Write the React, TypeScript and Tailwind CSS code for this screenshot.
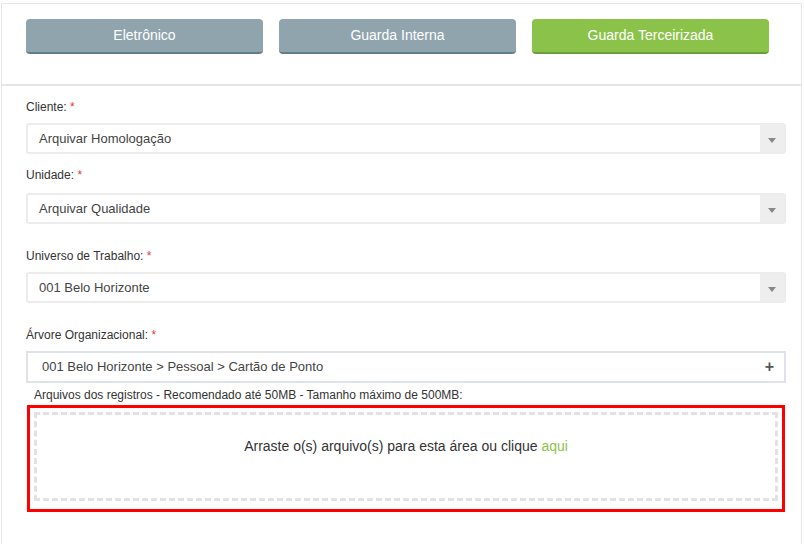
import React from "react";

type SelectProps = {
  label: string;
  value: string;
  className?: string;
  gap?: string;
};

const Label = ({ text, className }: { text: string; className?: string }) => (
  <div className={"h-[16px] text-[12px] leading-[16px] text-[#333] " + (className ?? "")}>
    {text} <span className="text-[#e53935]">*</span>
  </div>
);

const SelectBox = ({ label, value, className, gap }: SelectProps) => (
  <div className={className}>
    <Label text={label} />
    <div className={(gap ?? "mt-[8px]") + " flex h-[31px] rounded-[3px] border-2 border-[#ececec] bg-white"}>
      <div className="flex flex-1 items-center pl-[11px] text-[13px] text-[#444]">{value}</div>
      <div className="flex w-[24px] items-center justify-center bg-[#eeeeee] pt-[3px]">
        <span className="block h-0 w-0 border-x-[4px] border-t-[5px] border-x-transparent border-t-[#888]" />
      </div>
    </div>
  </div>
);

const tabs = [
  { name: "Eletrônico", active: false },
  { name: "Guarda Interna", active: false },
  { name: "Guarda Terceirizada", active: true },
];

export default function App() {
  return (
    <div className="h-[544px] w-[804px] overflow-hidden bg-white pl-[1px] pt-[3px] font-['Liberation_Sans',Arial,sans-serif]">
      <div className="h-[560px] w-[801px] border border-[#e6e6e6]">
        {/* header com os tipos de guarda */}
        <div className="flex gap-[16px] px-[24px] pb-[30px] pt-[15px]">
          {tabs.map((t) => (
            <button
              key={t.name}
              className={
                t.active
                  ? "h-[35px] w-[237px] rounded-[4px] border-b-2 border-[#689f38] bg-[#8bc34a] text-[14px] text-white"
                  : "h-[35px] w-[237px] rounded-[4px] border-b-2 border-[#607d8b] bg-[#90a4ae] text-[14px] text-white"
              }
            >
              {t.name}
            </button>
          ))}
        </div>
        <div className="h-[2px] bg-[#e6e6e6]" />

        <div className="pl-[24px] pr-[15px] pt-[13px]">
          <SelectBox label="Cliente:" value="Arquivar Homologação" />
          <SelectBox label="Unidade:" value="Arquivar Qualidade" className="mt-[13px]" gap="mt-[10px]" />
          <SelectBox label="Universo de Trabalho:" value="001 Belo Horizonte" className="mt-[24px]" />

          <Label text="Árvore Organizacional:" className="mt-[24px]" />
          <div className="mt-[8px] flex h-[32px] items-center border-2 border-[#dfe3e8] bg-white pl-[14px] pr-[10px] text-[13px] text-[#444]">
            <span className="flex-1">001 Belo Horizonte &gt; Pessoal &gt; Cartão de Ponto</span>
            <span className="text-[16px] font-bold leading-none text-[#555]">+</span>
          </div>

          <div className="ml-[8px] mt-[4px] h-[16px] text-[12px] leading-[16px] text-[#333]">
            Arquivos dos registros - Recomendado até 50MB - Tamanho máximo de 500MB:
          </div>

          <div className="ml-[1px] mt-[2px] w-[758px] border-[3px] border-[#ff0000] pb-[8px] pl-[4px] pr-[4px] pt-[4px]">
            <div className="h-[89px] border-[3px] border-dashed border-[#e2e2e2] pt-[21px] text-center text-[14px] leading-[20px] text-[#333]">
              Arraste o(s) arquivo(s) para esta área ou clique{" "}
              <span className="text-[#8bc34a]">aqui</span>
            </div>
          </div>
        </div>
      </div>
    </div>
  );
}
